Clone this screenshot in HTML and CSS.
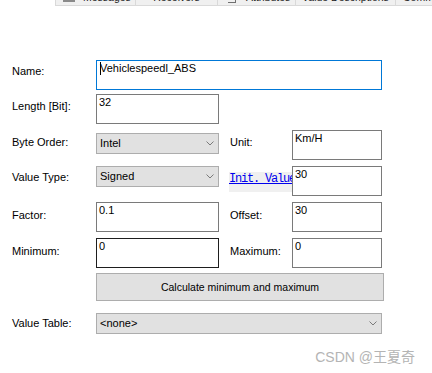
FILE: index.html
```html
<!DOCTYPE html>
<html lang="en">

<head>
    <meta charset="UTF-8">
    <title>Signal - Definition</title>
    <link rel="stylesheet" href="styles.css">
</head>

<body>
    <div class="tab-strip">
        <div class="tab tab-messages">
            <span class="tab-icon"></span><span class="tab-label">Messages</span>
        </div>
        <div class="tab tab-receivers"><span class="tab-label">Receivers</span></div>
        <div class="tab tab-attributes">
            <span class="tab-icon small"></span><span class="tab-label">Attributes</span>
        </div>
        <div class="tab tab-values"><span class="tab-label">Value Descriptions</span></div>
        <div class="tab tab-comment"><span class="tab-label">Comment</span></div>
    </div>

    <div class="signal-form">
        <div class="row row-name">
            <div class="label">Name:</div>
            <div class="edit edit-focus span-all"><span class="caret"></span>Vehiclespeedl_ABS</div>
        </div>

        <div class="row row-length">
            <div class="label">Length [Bit]:</div>
            <div class="edit">32</div>
        </div>

        <div class="row row-order">
            <div class="label">Byte Order:</div>
            <div class="combo combo-offset">
                <span>Intel</span>
                <svg class="chevron" viewBox="0 0 8 5" width="8" height="5"><path d="M0.5 0.5 L4 4 L7.5 0.5" fill="none" stroke="#7a7a7a" stroke-width="1"/></svg>
            </div>
            <div class="label label-right">Unit:</div>
            <div class="edit">Km/H</div>
        </div>

        <div class="row row-type">
            <div class="label">Value Type:</div>
            <div class="combo">
                <span>Signed</span>
                <svg class="chevron" viewBox="0 0 8 5" width="8" height="5"><path d="M0.5 0.5 L4 4 L7.5 0.5" fill="none" stroke="#7a7a7a" stroke-width="1"/></svg>
            </div>
            <div class="init-link"><a href="#">Init. Value</a></div>
            <div class="edit">30</div>
        </div>

        <div class="row row-factor">
            <div class="label">Factor:</div>
            <div class="edit">0.1</div>
            <div class="label label-right">Offset:</div>
            <div class="edit">30</div>
        </div>

        <div class="row row-minmax">
            <div class="label">Minimum:</div>
            <div class="edit edit-hover">0</div>
            <div class="label label-right">Maximum:</div>
            <div class="edit">0</div>
        </div>

        <div class="row row-button">
            <button class="calc-btn span-all">Calculate minimum and maximum</button>
        </div>

        <div class="row row-table">
            <div class="label">Value Table:</div>
            <div class="combo span-all">
                <span>&lt;none&gt;</span>
                <svg class="chevron" viewBox="0 0 8 5" width="8" height="5"><path d="M0.5 0.5 L4 4 L7.5 0.5" fill="none" stroke="#7a7a7a" stroke-width="1"/></svg>
            </div>
        </div>
    </div>

    <div class="watermark">CSDN @王夏奇</div>
</body>

</html>
```

FILE: styles.css
```css
body,
html {
    margin: 0;
    padding: 0;
    background-color: white;
    font-family: 'Liberation Sans', Arial, 'Noto Sans CJK SC', sans-serif;
    font-size: 11px;
    line-height: 13px;
    color: #000;
}

body {
    position: relative;
    width: 432px;
    height: 373px;
    overflow: hidden;
}

/* tab strip, only its lower edge is visible */

.tab-strip {
    display: flex;
    height: 5px;
    margin-left: 55px;
    border-bottom: 1px solid #d9d9d9;
    overflow: hidden;
}

.tab {
    height: 5px;
    background-color: #f0f0f0;
    border-left: 1px solid #d9d9d9;
    display: flex;
    justify-content: center;
    overflow: hidden;
    white-space: nowrap;
    box-sizing: border-box;
    flex-shrink: 0;
}

.tab-messages {
    width: 80px;
    justify-content: flex-start;
    padding-left: 7px;
}

.tab-receivers {
    width: 82px;
}

.tab-attributes {
    width: 78px;
    justify-content: flex-start;
    padding-left: 10px;
}

.tab-values {
    width: 100px;
}

.tab-comment {
    flex-grow: 1;
    justify-content: flex-start;
    padding-left: 7px;
}

.tab-label {
    margin-top: -9px;
    color: #222;
    font-size: 10.5px;
}

.tab-icon {
    width: 12px;
    height: 2px;
    margin-right: 8px;
    background-color: #8a8a8a;
}

.tab-icon.small {
    width: 8px;
    height: 3px;
    background-color: transparent;
    border-right: 1px solid #707070;
    border-bottom: 1px solid #707070;
    box-sizing: border-box;
    margin-right: 10px;
}

/* form */

.signal-form {
    padding: 54px 0 0 12px;
}

.row {
    display: grid;
    grid-template-columns: 84px 123px 11px 62px 90px;
    align-items: start;
    height: 30px;
}

.row > :nth-child(3) {
    grid-column: 4;
}

.row > :nth-child(4) {
    grid-column: 5;
}

.row-length {
    margin-top: 4px;
}

.row-order,
.row-type,
.row-factor,
.row-minmax {
    margin-top: 6px;
}

.row-button {
    margin-top: 5px;
    height: 28px;
}

.row-table {
    margin-top: 12px;
    height: 21px;
}

.span-all {
    grid-column: 2 / -1;
}

.label {
    padding-top: 6px;
    white-space: nowrap;
}

.row-name .label {
    padding-top: 5px;
}

.row-type .label {
    padding-top: 5px;
}

.row-factor .label {
    padding-top: 7px;
}

.row-minmax .label {
    padding-top: 7px;
}

.row-table .label {
    padding-top: 4px;
}

.edit {
    box-sizing: border-box;
    height: 30px;
    border: 1px solid #7a7a7a;
    background-color: white;
    padding: 1px 2px;
    white-space: nowrap;
    overflow: hidden;
}

.edit-focus {
    border-color: #0078d7;
    padding-left: 3px;
}

.edit-hover {
    border-color: #1e1e1e;
}

.caret {
    display: inline-block;
    width: 1px;
    height: 13px;
    margin-right: -1px;
    vertical-align: top;
    background-color: #000;
}

.combo {
    box-sizing: border-box;
    height: 21px;
    border: 1px solid #adadad;
    background-color: #e1e1e1;
    padding: 0 4px 0 3px;
    display: flex;
    align-items: center;
    justify-content: space-between;
}

.combo-offset {
    margin-top: 3px;
}

.chevron {
    display: block;
}

.init-link {
    margin: 6px 0 0 -1px;
    height: 20px;
    background-color: #f0f0f0;
    overflow: hidden;
    white-space: nowrap;
}

.init-link a {
    display: block;
    padding-top: 1px;
    color: #0000ee;
    font-family: 'Liberation Mono', 'Courier New', monospace;
    font-size: 12px;
    letter-spacing: -1.2px;
    text-decoration: underline;
}

.calc-btn {
    box-sizing: border-box;
    height: 28px;
    margin-right: -2px;
    border: 1px solid #adadad;
    background-color: #e1e1e1;
    font-family: inherit;
    font-size: 10.5px;
    color: #000;
    padding: 0;
}

.watermark {
    position: absolute;
    right: 17px;
    bottom: 8px;
    color: #b4b4b4;
    font-size: 14px;
    line-height: 16px;
}
```
